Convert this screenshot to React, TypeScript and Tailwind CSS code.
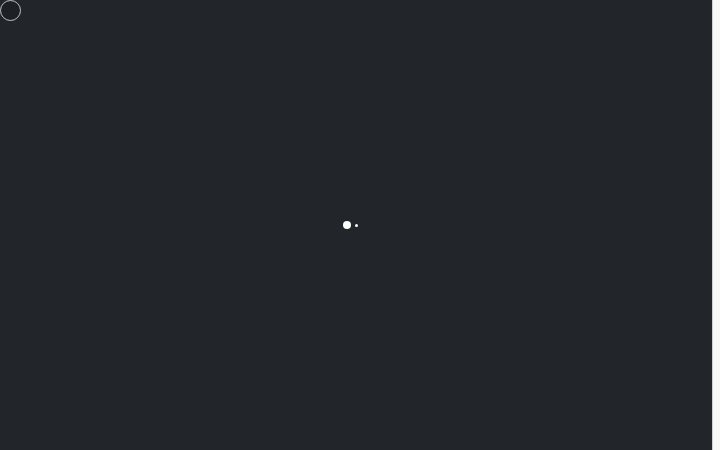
export default function App() {
  return (
    <div className="flex h-[450px] w-[720px] overflow-hidden">
      <div className="relative flex-1 bg-[#222529]">
        <div className="absolute left-0 top-0 h-[21px] w-[21px] rounded-full border border-[#c4c4c4] bg-[#1d2024]" />
        <div className="flex h-full items-center justify-center gap-[4px] pr-[12px]">
          <div className="h-[8px] w-[8px] rounded-full bg-white" />
          <div className="h-[3px] w-[3px] rounded-full bg-white" />
        </div>
      </div>
      <div className="w-[8px] border-l border-[#d0d0d0] bg-[#f7f7f7]" />
    </div>
  );
}
